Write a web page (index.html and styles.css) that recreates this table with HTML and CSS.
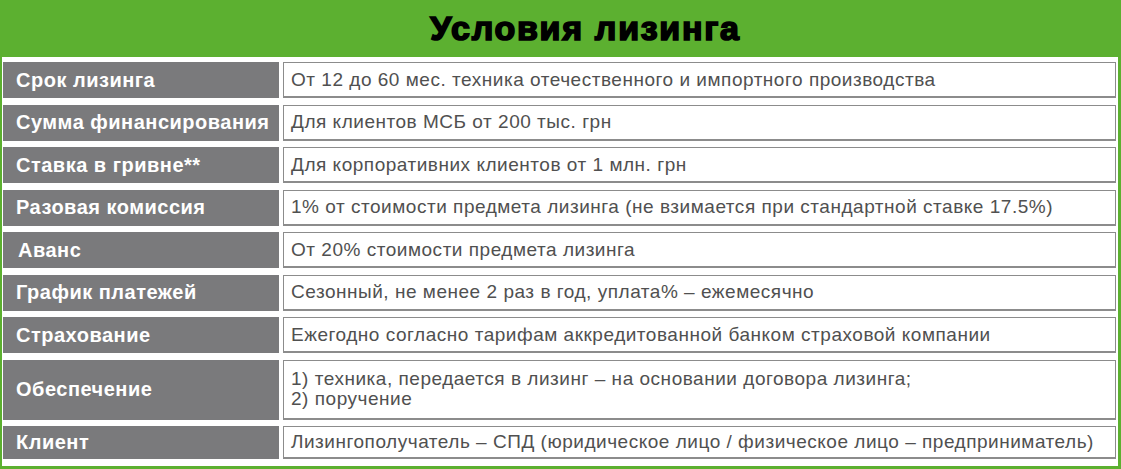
FILE: index.html
```html
<!DOCTYPE html>
<html lang="ru">
<head>
<meta charset="utf-8">
<link rel="stylesheet" href="styles.css">
</head>
<body>
<div class="page">
  <div class="title">Условия лизинга</div>
  <div class="panel">
    <div class="row"><div class="label">Срок лизинга</div><div class="value">От 12 до 60 мес. техника отечественного и импортного производства</div></div>
    <div class="row"><div class="label">Сумма финансирования</div><div class="value">Для клиентов МСБ от 200 тыс. грн</div></div>
    <div class="row"><div class="label">Ставка в гривне**</div><div class="value">Для корпоративних клиентов от 1 млн. грн</div></div>
    <div class="row"><div class="label">Разовая комиссия</div><div class="value">1% от стоимости предмета лизинга (не взимается при стандартной ставке 17.5%)</div></div>
    <div class="row"><div class="label indent">Аванс</div><div class="value">От 20% стоимости предмета лизинга</div></div>
    <div class="row"><div class="label">График платежей</div><div class="value">Сезонный, не менее 2 раз в год, уплата% – ежемесячно</div></div>
    <div class="row"><div class="label">Страхование</div><div class="value">Ежегодно согласно тарифам аккредитованной банком страховой компании</div></div>
    <div class="row tall"><div class="label">Обеспечение</div><div class="value">1) техника, передается в лизинг – на основании договора лизинга;<br>2) поручение</div></div>
    <div class="row short"><div class="label">Клиент</div><div class="value">Лизингополучатель – СПД (юридическое лицо / физическое лицо – предприниматель)</div></div>
  </div>
</div>
</body>
</html>
```

FILE: styles.css
```css
html, body {
  margin: 0;
  padding: 0;
}
body {
  background: #5cb030;
  font-family: "Liberation Sans", Arial, sans-serif;
}
.page {
  width: 1121px;
  height: 469px;
  display: flex;
  flex-direction: column;
  background: #5cb030;
}
.title {
  height: 57px;
  flex: none;
  display: flex;
  align-items: center;
  justify-content: center;
  font-size: 34px;
  font-weight: bold;
  color: #000;
  -webkit-text-stroke: 1.7px #000;
  letter-spacing: 1.7px;
  padding-left: 50px;
  box-sizing: border-box;
}
.panel {
  flex: 1;
  margin: 0 3px 3px 2px;
  background: #fff;
  padding: 5px 2px 0 1px;
  display: flex;
  flex-direction: column;
  gap: 6.5px;
}
.row {
  display: flex;
  height: 36px;
  gap: 4px;
}
.row.tall {
  height: 60px;
}
.row.short {
  height: 33px;
}
.label {
  width: 276px;
  flex: none;
  background: #7a7a7c;
  color: #fff;
  font-weight: bold;
  font-size: 20px;
  letter-spacing: 0.5px;
  display: flex;
  align-items: center;
  padding-left: 13px;
  box-sizing: border-box;
  white-space: nowrap;
}
.label.indent {
  padding-left: 15px;
}
.value {
  flex: 1;
  border: 1px solid #8c8c8c;
  border-bottom: 2px solid #8c8c8c;
  box-sizing: border-box;
  display: flex;
  align-items: center;
  padding-left: 7px;
  color: #505050;
  font-size: 19px;
  letter-spacing: 0.52px;
  line-height: 20px;
  white-space: nowrap;
}
```
